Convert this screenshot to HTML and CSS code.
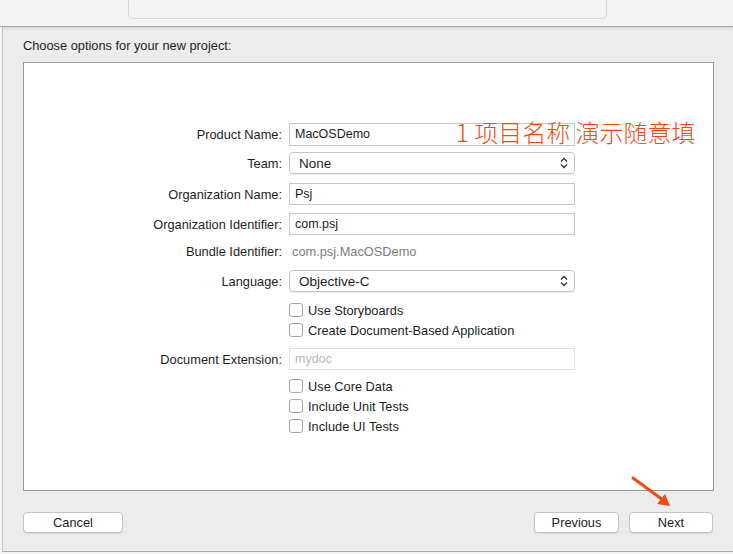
FILE: index.html
```html
<!DOCTYPE html>
<html>
<head>
<meta charset="utf-8">
<link rel="stylesheet" href="styles.css">
</head>
<body>
<div class="topbar"><div class="tabbox"></div></div>
<div class="dialog">
  <div class="title">Choose options for your new project:</div>
  <div class="panel">
    <div class="row r-product">
      <div class="label">Product Name:</div>
      <div class="field">MacOSDemo</div>
      <div class="note">1 项目名称 演示随意填</div>
    </div>
    <div class="row r-team">
      <div class="label">Team:</div>
      <div class="popup"><span>None</span>
        <svg class="chev" width="8" height="12" viewBox="0 0 8 12"><path d="M1 4.5 L4 1.5 L7 4.5 M1 7.5 L4 10.5 L7 7.5" fill="none" stroke="#333" stroke-width="1.3"/></svg>
      </div>
    </div>
    <div class="row r-orgname">
      <div class="label">Organization Name:</div>
      <div class="field">Psj</div>
    </div>
    <div class="row r-orgid">
      <div class="label">Organization Identifier:</div>
      <div class="field">com.psj</div>
    </div>
    <div class="row r-bundle">
      <div class="label">Bundle Identifier:</div>
      <div class="static">com.psj.MacOSDemo</div>
    </div>
    <div class="row r-lang">
      <div class="label">Language:</div>
      <div class="popup"><span>Objective-C</span>
        <svg class="chev" width="8" height="12" viewBox="0 0 8 12"><path d="M1 4.5 L4 1.5 L7 4.5 M1 7.5 L4 10.5 L7 7.5" fill="none" stroke="#333" stroke-width="1.3"/></svg>
      </div>
    </div>
    <div class="row r-cb1 cbrow">
      <div class="label"></div>
      <div class="check"><span class="box"></span>Use Storyboards</div>
    </div>
    <div class="row cbrow">
      <div class="label"></div>
      <div class="check"><span class="box"></span>Create Document-Based Application</div>
    </div>
    <div class="row r-docext">
      <div class="label">Document Extension:</div>
      <div class="field disabled">mydoc</div>
    </div>
    <div class="row r-cb3 cbrow">
      <div class="label"></div>
      <div class="check"><span class="box"></span>Use Core Data</div>
    </div>
    <div class="row cbrow">
      <div class="label"></div>
      <div class="check"><span class="box"></span>Include Unit Tests</div>
    </div>
    <div class="row cbrow">
      <div class="label"></div>
      <div class="check"><span class="box"></span>Include UI Tests</div>
    </div>
  </div>
  <div class="buttons">
    <div class="btn btn-cancel">Cancel</div>
    <div class="spacer"></div>
    <div class="btn btn-prev">Previous</div>
    <div class="btn btn-next">Next</div>
  </div>
  <svg class="arrow" width="50" height="40" viewBox="0 0 50 40">
    <path d="M3 3 L33 25" stroke="#f24a17" stroke-width="3" stroke-linecap="round"/>
    <path d="M40 31 L27 29 L35 19 Z" fill="#f24a17"/>
  </svg>
</div>
</body>
</html>
```
FILE: styles.css
```css
html, body {
  margin: 0;
  padding: 0;
}
body {
  width: 733px;
  height: 554px;
  overflow: hidden;
  background: #f4f4f4;
  font-family: "Liberation Sans", Arial, sans-serif;
  font-size: 12.8px;
  color: #1e1e1e;
}
.topbar {
  height: 26px;
  background: #f3f3f3;
  border-bottom: 1px solid #a9a9a9;
  box-sizing: content-box;
}
.tabbox {
  margin-left: 128px;
  width: 479px;
  height: 19px;
  box-sizing: border-box;
  border: 1px solid #d6d6d6;
  border-top: none;
  border-radius: 0 0 5px 5px;
  background: #f4f4f4;
}
.dialog {
  position: relative;
  margin-left: 2px;
  height: 525px;
  box-sizing: border-box;
  background: #ececec;
  border-left: 1px solid #c4c4c4;
  border-bottom: 1px solid #a9a9a9;
  padding: 11px 0 0 20px;
  box-shadow: inset 0 3px 3px -2px rgba(0,0,0,0.12);
}
.title {
  height: 16px;
  line-height: 16px;
}
.panel {
  margin-top: 8px;
  width: 691px;
  height: 429px;
  box-sizing: border-box;
  background: #fff;
  border: 1px solid #9b9b9b;
  padding-top: 60px;
}
.row {
  display: flex;
  align-items: center;
  position: relative;
  height: 22px;
}
.label {
  width: 258px;
  flex: none;
  text-align: right;
  padding-right: 7px;
  box-sizing: content-box;
  white-space: nowrap;
}
.field {
  width: 286px;
  height: 22px;
  box-sizing: border-box;
  border: 1px solid #c8c8c8;
  padding: 0 5px;
  line-height: 20px;
  background: #fff;
  font-size: 12.5px;
}
.field.disabled {
  border-color: #e0e0e0;
  color: #b8b8b8;
}
.r-product { height: 23px; }
.r-product .field { height: 23px; line-height: 21px; }
.r-team { margin-top: 6px; }
.r-orgname { margin-top: 9px; }
.r-orgid { margin-top: 8px; }
.r-bundle { margin-top: 6px; height: 20px; }
.r-lang { margin-top: 9px; }
.r-cb1 { margin-top: 8px; }
.r-docext { margin-top: 8px; }
.r-cb3 { margin-top: 6px; }
.cbrow { height: 20px; }
.static {
  color: #7d7d7d;
  padding-left: 3px;
}
.popup {
  width: 286px;
  height: 22px;
  box-sizing: border-box;
  border: 1px solid #c6c6c6;
  border-radius: 4px;
  box-shadow: 0 1px 1px rgba(0,0,0,0.08);
  display: flex;
  align-items: center;
  justify-content: space-between;
  padding: 0 6px 0 9px;
  font-size: 13.5px;
}
.chev { display: block; }
.check {
  display: flex;
  align-items: center;
}
.box {
  width: 14px;
  height: 14px;
  box-sizing: border-box;
  border: 1px solid #a9a9a9;
  border-radius: 3px;
  background: #fff;
  margin-right: 5px;
}
.note {
  position: absolute;
  left: 432px;
  top: -5px;
  font-family: "Noto Sans CJK SC", "Liberation Sans", sans-serif;
  font-weight: 300;
  font-size: 24px;
  line-height: 28px;
  color: #f24a17;
  white-space: nowrap;
}
.buttons {
  display: flex;
  width: 690px;
  margin-top: 21px;
}
.spacer { flex: 1; }
.btn {
  height: 21px;
  box-sizing: border-box;
  border: 1px solid #c3c3c3;
  border-radius: 4px;
  background: #fff;
  box-shadow: 0 1px 1px rgba(0,0,0,0.08);
  text-align: center;
  line-height: 19px;
}
.btn-cancel { width: 100px; }
.btn-prev { width: 85px; }
.btn-next { width: 84px; margin-left: 10px; }
.arrow {
  position: absolute;
  left: 627px;
  top: 448px;
}
```
